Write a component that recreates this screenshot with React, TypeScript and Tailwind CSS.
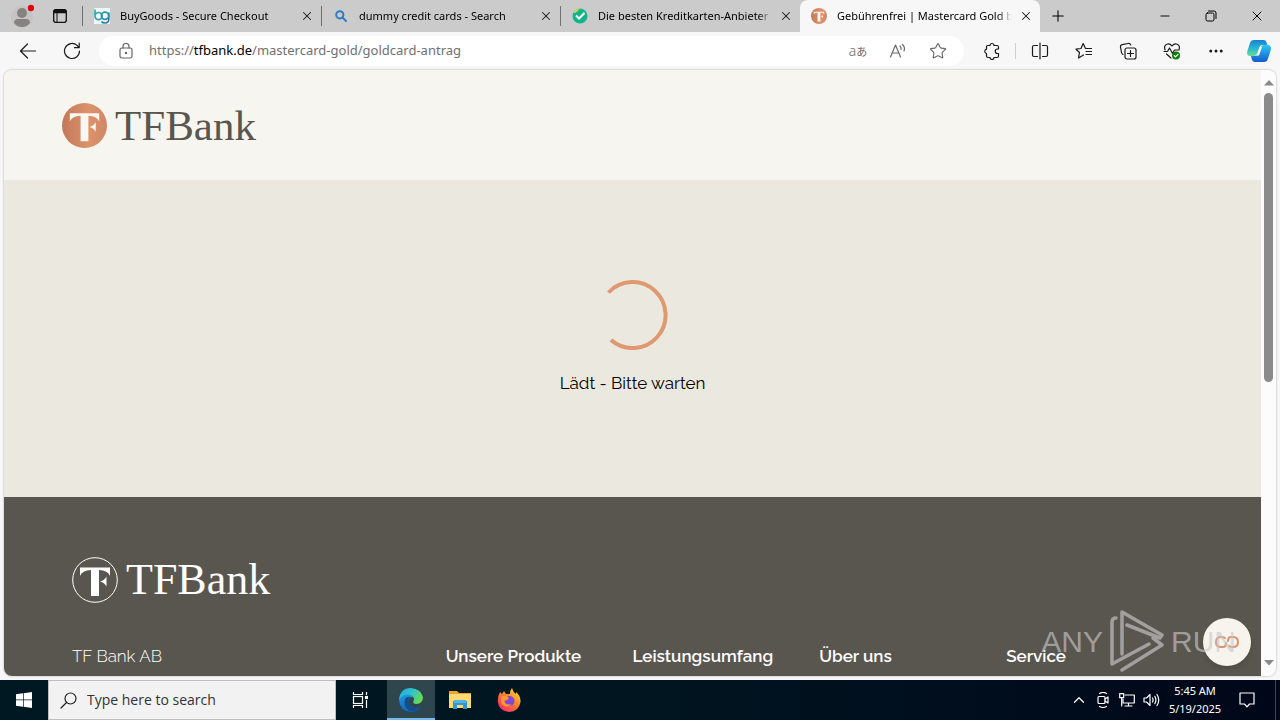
import type { ReactNode } from "react";
import { Star, X, Plus, Minus, MoreHorizontal, ChevronUp } from "lucide-react";

const uiFont = "font-['Noto_Sans','Open_Sans',sans-serif]";

function Tab({ title, icon, active = false, edge = true }: { title: string; icon: ReactNode; active?: boolean; edge?: boolean }) {
  return (
    <div
      role="tab"
      aria-selected={active}
      className={
        active
          ? "flex h-8 w-60 min-w-0 items-center rounded-t-lg bg-[#f7f7f7] pl-[11px]"
          : "flex h-8 w-[239px] min-w-0 items-center pl-[11px]"
      }
    >
      <span className="mr-2.5 flex h-4 w-4 shrink-0 items-center justify-center">{icon}</span>
      <span className="min-w-0 flex-1 overflow-hidden whitespace-nowrap text-[11px] leading-4 text-black [mask-image:linear-gradient(to_right,black_92%,transparent)]">
        {title}
      </span>
      <button aria-label={"Close " + title} className="flex h-7 w-7 shrink-0 items-center justify-center text-[#1b1b1b]">
        <X className="h-3.5 w-3.5" strokeWidth={1.8} />
      </button>
      {!active && edge && <span className="h-5 w-px shrink-0 bg-[#707070]" />}
    </div>
  );
}

function Monogram({ className }: { className: string }) {
  return (
    <g className={className}>
      <path d="M8 10.500H38V19Q36 13.500 27 13V39H19V13Q10 13.500 8 19Z" />
      <path d="M34.500 19.500V29.500Q32.500 25.500 28 24.500Q32.500 23.500 34.500 19.500Z" />
    </g>
  );
}

function CopperMark({ className, id }: { className: string; id: string }) {
  return (
    <svg viewBox="0 0 46 46" className={className} aria-hidden="true">
      <defs>
        <linearGradient id={id} x1="0" y1="0" x2="1" y2="0">
          <stop offset="0" stopColor="#c4775b" />
          <stop offset="0.6" stopColor="#dc936b" />
          <stop offset="1" stopColor="#cf8767" />
        </linearGradient>
      </defs>
      <circle cx="23" cy="23" r="23" fill={`url(#${id})`} />
      <Monogram className="fill-[#fbf8f3]" />
    </svg>
  );
}

function ToolButton({ label, children }: { label: string; children: ReactNode }) {
  return (
    <button aria-label={label} className="flex h-8 w-11 shrink-0 items-center justify-center text-[#1b1b1b]">
      {children}
    </button>
  );
}

const line = { fill: "none", stroke: "currentColor", strokeWidth: 1.2, strokeLinecap: "round", strokeLinejoin: "round" } as const;

function TabStrip() {
  return (
    <div className="flex h-8 shrink-0 bg-[#cbcbcb]">
      <div className="flex w-[83px] shrink-0 items-center">
        <button aria-label="Profile" className="flex h-8 w-11 shrink-0 items-center justify-center">
          <svg viewBox="0 0 24 26" className="h-[26px] w-6">
            <circle cx="12" cy="14" r="11" fill="#c6c4c2" />
            <circle cx="12" cy="10" r="5" fill="#85827f" />
            <path d="M4 20Q4 16 8 16H16Q20 16 20 20Q17 24 12 24T4 20Z" fill="#85827f" />
            <circle cx="21" cy="5" r="3.2" fill="#e3000f" />
          </svg>
        </button>
        <button aria-label="Tab actions" className="flex h-8 w-8 shrink-0 items-center justify-center">
          <svg viewBox="0 0 16 16" className="h-4 w-4">
            <rect x="1.7" y="1.7" width="12.6" height="12.6" rx="2" fill="none" stroke="#111" strokeWidth="1.3" />
            <path d="M1.5 3.5Q1.5 1.5 3.5 1.5H12.5Q14.5 1.5 14.5 3.5V5.2H1.5Z" fill="#111" />
            <path d="M5 5V14" stroke="#111" />
          </svg>
        </button>
        <span className="ml-auto h-5 w-px bg-[#707070]" />
      </div>
      <div role="tablist" className="flex min-w-0">
        <Tab
          title="BuyGoods - Secure Checkout"
          icon={
            <svg viewBox="0 0 16 16" className="h-4 w-4">
              <rect width="16" height="16" fill="#eef8f9" />
              <g fill="none" strokeWidth="1.7">
                <path d="M1 1.5V8A3.6 3.6 0 1 0 4.6 4.5Q2 4.5 1 7" stroke="#39a5ac" />
                <path d="M14.8 4.5V11.5Q14.5 15 11 15Q8.500 15 7.500 13.500" stroke="#257fa3" />
                <circle cx="11" cy="7.800" r="3.600" stroke="#2e91ad" />
              </g>
            </svg>
          }
        />
        <Tab
          title="dummy credit cards - Search"
          icon={
            <svg viewBox="0 0 16 16" className="h-4 w-4" fill="none" stroke="#2f7cc4" strokeWidth="2">
              <circle cx="6.800" cy="6.800" r="3.600" />
              <path d="M9.500 9.500L13 13" strokeLinecap="round" />
            </svg>
          }
        />
        <Tab
          title="Die besten Kreditkarten-Anbieter"
          edge={false}
          icon={
            <svg viewBox="0 0 16 16" className="h-4 w-4">
              <circle cx="8" cy="8" r="7.500" fill="#11b589" />
              <path d="M1.500 4.500Q4 .5 8 .5L3.500 5Z" fill="#e7d84b" />
              <path d="M4 7.500L7 10.500L12.500 5" fill="none" stroke="#fff" strokeWidth="2" />
            </svg>
          }
        />
        <Tab title="Gebührenfrei | Mastercard Gold b" active icon={<CopperMark id="tabCopper" className="h-4 w-4" />} />
      </div>
      <button aria-label="New tab" className="flex h-8 w-9 shrink-0 items-center justify-center text-black">
        <Plus className="h-[18px] w-[18px]" strokeWidth={1.4} />
      </button>
      <div className="ml-auto flex shrink-0 text-black">
        <button aria-label="Minimize" className="flex h-8 w-[46px] items-center justify-center">
          <Minus className="h-3.5 w-3.5" strokeWidth={1.6} />
        </button>
        <button aria-label="Restore" className="flex h-8 w-[46px] items-center justify-center">
          <svg viewBox="0 0 12 12" className="h-3 w-3" {...line} strokeWidth={1}>
            <rect x="1" y="3" width="8" height="8" rx="1.500" />
            <path d="M3.500 1H9Q11 1 11 3V8.500" />
          </svg>
        </button>
        <button aria-label="Close window" className="flex h-8 w-[46px] items-center justify-center">
          <X className="h-4 w-4" strokeWidth={1.5} />
        </button>
      </div>
    </div>
  );
}

function Toolbar() {
  return (
    <div className="flex h-[38px] shrink-0 items-center bg-[#f7f7f7] pl-1.5">
      <ToolButton label="Back">
        <svg viewBox="0 0 18 18" className="h-[18px] w-[18px]" {...line}>
          <path d="M16.500 9H1.500M8.500 2L1.500 9L8.500 16" />
        </svg>
      </ToolButton>
      <ToolButton label="Refresh">
        <svg viewBox="0 0 18 18" className="h-[18px] w-[18px]" {...line}>
          <path d="M16.500 9A7.500 7.500 0 1 1 14 3.400L16 5.500M16.200 1V5.700H11.500" />
        </svg>
      </ToolButton>
      <div className="ml-[5px] flex h-[30px] min-w-0 flex-1 items-center rounded-full bg-white pr-1.5">
        <span className="flex w-[50px] shrink-0 justify-center pl-1 text-[#666]">
          <svg viewBox="0 0 14 16" className="h-4 w-3.5" {...line}>
            <rect x="1" y="5" width="12" height="10" rx="1.800" />
            <path d="M4 5V3.500A3 3 0 0 1 10 3.500V5" />
            <circle cx="7" cy="10" r=".6" fill="currentColor" />
          </svg>
        </span>
        <a href="https://tfbank.de/mastercard-gold/goldcard-antrag" className="min-w-0 flex-1 truncate text-[13px] text-[#707070]">
          https://<span className="text-black">tfbank.de</span>/mastercard-gold/goldcard-antrag
        </a>
        <button aria-label="Translate" className="flex h-7 w-10 shrink-0 items-center justify-center text-[#6a6a6a]">
          <span className="text-sm leading-5 font-light">a</span>
          <span className="font-['Noto_Sans_CJK_JP',sans-serif] text-[11px] leading-5">あ</span>
        </button>
        <button aria-label="Read aloud" className="flex h-7 w-10 shrink-0 items-center justify-center text-[#6a6a6a]">
          <svg viewBox="0 0 18 16" className="h-4 w-[18px]" {...line}>
            <path d="M1.500 14L6.500 2L11.500 14M3.200 10H9.800M11 3Q12.500 4.500 12 6.500M13.500 1.500Q16.500 4.500 15 8" />
          </svg>
        </button>
        <button aria-label="Add to favorites" className="flex h-7 w-10 shrink-0 items-center justify-center text-[#6a6a6a]">
          <Star className="h-[18px] w-[18px]" strokeWidth={1.500} />
        </button>
      </div>
      <div className="ml-1.5 flex shrink-0 items-center">
        <ToolButton label="Extensions">
          <svg viewBox="0 0 18 18" className="h-[18px] w-[18px]" {...line}>
            <path d="M4.500 3.500H7A2 2 0 0 1 11 3.500H14Q15.500 3.500 15.500 5V7H14.500A2 2 0 0 0 14.500 11.500H15.500V14Q15.500 15.500 14 15.500H11A2 2 0 0 1 7 15.500H5Q3.500 15.500 3.500 14V11.500A2.200 2.200 0 0 1 3.500 7.200V5Q3.500 3.500 4.500 3.500Z" />
          </svg>
        </ToolButton>
        <span className="mr-0.5 ml-px h-4 w-px bg-[#cfcfcf]" />
        <ToolButton label="Split screen">
          <svg viewBox="0 0 18 18" className="h-[18px] w-[18px]" {...line}>
            <path d="M9 1V17M6.500 3.500H3Q1.500 3.500 1.500 5V13Q1.500 14.500 3 14.500H6.500M11.500 3.500H15Q16.500 3.500 16.500 5V13Q16.500 14.500 15 14.500H11.500" />
          </svg>
        </ToolButton>
        <ToolButton label="Favorites">
          <svg viewBox="0 0 18 18" className="h-[18px] w-[18px]" {...line}>
            <path d="M16.500 6.500H10.500L8.200 1.500L6 6.500L1 7.200L4.500 10.500L3.500 16L8.500 13M11 9.500H16.500M11 12.500H16.500" />
          </svg>
        </ToolButton>
        <ToolButton label="Collections">
          <svg viewBox="0 0 18 18" className="h-[18px] w-[18px]" {...line}>
            <rect x="6" y="6" width="11" height="11" rx="2" />
            <path d="M11.500 8.500V14.500M8.500 11.500H14.500M4 12.500Q2.800 12 2.500 10.500L1.500 5Q1.200 3 3.200 2.600L9 1.500Q11 1.200 11.800 3" />
          </svg>
        </ToolButton>
        <ToolButton label="Browser essentials">
          <svg viewBox="0 0 18 18" className="h-[18px] w-[18px]" {...line}>
            <path d="M2 8Q.5 3 4.500 2Q7 1.500 9 4Q11 1.500 13.500 2Q17.500 3 16 8M1 9.500H4.500L6.500 6L9.500 11.500L11.500 8H15M3.500 12L8 16" />
            <circle cx="13" cy="13.500" r="4" fill="#107c10" stroke="none" />
            <path d="M11.200 13.600L12.500 14.800L15 12.300" stroke="#fff" />
          </svg>
        </ToolButton>
        <ToolButton label="Settings and more">
          <MoreHorizontal className="h-[18px] w-[18px]" strokeWidth={2} />
        </ToolButton>
        <button aria-label="Copilot" className="flex h-8 w-[42px] items-center justify-center">
          <svg viewBox="0 0 24 22" className="h-[22px] w-6">
            <defs>
              <linearGradient id="pilotLeft" x1="0" y1="0" x2="0" y2="1">
                <stop offset="0" stopColor="#1680d8" />
                <stop offset=".55" stopColor="#2bb9cc" />
                <stop offset="1" stopColor="#6bdc93" />
              </linearGradient>
              <linearGradient id="pilotRight" x1="0" y1="0" x2="0" y2="1">
                <stop offset="0" stopColor="#2bc7f4" />
                <stop offset="1" stopColor="#145bd0" />
              </linearGradient>
            </defs>
            <path d="M7 0H17Q19 0 19.800 3L20.500 5H15Q13 5 12.300 7.500L10 14Q9.200 16 7 16H3Q-1 16 .5 10.500L3 3Q4 0 7 0Z" fill="url(#pilotLeft)" />
            <path d="M17 22H8Q5.500 22 4.700 19L4 16H8.500Q10.500 16 11.300 14L14 7Q14.800 5 17 5H21Q25 5.500 23.500 11L21 18.500Q20 22 17 22Z" fill="url(#pilotRight)" />
            <path d="M13 7L10 15.500H12L15 7Z" fill="#f7f7f7" />
          </svg>
        </button>
      </div>
    </div>
  );
}

function Scrollbar() {
  return (
    <div className="flex w-[15px] shrink-0 flex-col items-center bg-[#fcfcfc] py-2.5">
      <svg viewBox="0 0 10 6" className="h-1.5 w-2.5 fill-[#8a8a8a]">
        <path d="M5 0L10 5.500H0Z" />
      </svg>
      <div className="mt-[7px] w-[9px] flex-1">
        <div className="h-[51%] rounded-full bg-[#8b8b8b]" />
      </div>
      <svg viewBox="0 0 10 6" className="h-1.5 w-2.5 fill-[#8a8a8a]">
        <path d="M5 5.500L10 0H0Z" />
      </svg>
    </div>
  );
}

function Watermark() {
  return (
    <div className="pointer-events-none absolute right-10 bottom-0 flex h-[70px] items-center gap-1.5 font-['Liberation_Sans_Narrow','Liberation_Sans',sans-serif] text-[30px] text-[#c8c8c8]/65">
      <span>ANY</span>
      <svg viewBox="0 0 56 62" className="h-[62px] w-14" fill="none" stroke="currentColor" strokeWidth="3.500" strokeLinejoin="round" strokeLinecap="round">
        <path d="M7 8Q3 8 3 12V54L40 34M13 44V2L53 25L51 28L18 15M44 28L53 35L13 60" />
      </svg>
      <span>RUN</span>
    </div>
  );
}

const footerColumns = ["Unsere Produkte", "Leistungsumfang", "Über uns", "Service"];

function BankPage() {
  return (
    <div className="flex min-w-0 flex-1 flex-col font-['Raleway','Lato',sans-serif]">
      <header className="flex h-[110px] shrink-0 items-center bg-[#f7f5ef] pl-[58px]">
        <a href="#start" className="flex items-center gap-2 text-[#595650]">
          <CopperMark id="headerCopper" className="h-[45px] w-[45px]" />
          <span className="font-['Liberation_Serif',serif] text-[43px] leading-[45px]">TFBank</span>
        </a>
      </header>
      <main className="flex shrink-0 flex-col items-center bg-[#ebe8df] pt-[100px] pb-[102px]">
        <svg viewBox="0 0 70 70" className="h-[70px] w-[70px]" role="img" aria-label="Lädt">
          <path d="M10.500 12.500A33 33 0 1 1 13 60" fill="none" stroke="#df986f" strokeWidth="4" />
        </svg>
        <p className="mt-[21px] text-[17px] leading-6 text-black">Lädt - Bitte warten</p>
      </main>
      <footer className="flex-1 bg-[#595650] px-[68px] pt-[60px] text-white">
        <a href="#start" className="flex items-center gap-2">
          <svg viewBox="0 0 46 46" className="h-[46px] w-[46px]" aria-hidden="true">
            <circle cx="23" cy="23" r="22.300" fill="none" stroke="#fff" />
            <Monogram className="fill-white" />
          </svg>
          <span className="font-['Liberation_Serif',serif] text-[44px] leading-[46px]">TFBank</span>
        </a>
        <div className="mt-[41px] grid grid-cols-6 text-[17px] leading-6 whitespace-nowrap">
          <p className="col-span-2 font-light">TF Bank AB</p>
          {footerColumns.map((name) => (
            <h2 key={name} className="font-semibold">
              {name}
            </h2>
          ))}
        </div>
      </footer>
    </div>
  );
}

function Taskbar() {
  return (
    <div className="flex h-10 shrink-0 bg-linear-to-r from-[#001822] via-[#001520] to-[#000719] text-white">
      <button aria-label="Start" className="flex w-12 shrink-0 items-center justify-center">
        <svg viewBox="0 0 16 16" className="h-4 w-4 fill-white">
          <path d="M0 2.300L7 1.300V7.600H0ZM7.700 1.200L16 0V7.600H7.700ZM0 8.300H7V14.700L0 13.700ZM7.700 8.300H16V16L7.700 14.800Z" />
        </svg>
      </button>
      <label className="flex w-72 min-w-0 items-center border border-[#bdbdbd] bg-[#f2f2f2] pl-[11px] text-[#222]">
        <svg viewBox="0 0 17 17" className="mr-2.5 h-[17px] w-[17px] shrink-0" {...line}>
          <circle cx="10.500" cy="6.500" r="5.500" />
          <path d="M6.500 10.500L1 16" />
        </svg>
        <input
          aria-label="Type here to search"
          placeholder="Type here to search"
          className="w-full min-w-0 bg-transparent font-['Open_Sans',sans-serif] text-sm outline-none placeholder:text-[#333]"
        />
      </label>
      <button aria-label="Task view" className="flex w-12 shrink-0 items-center justify-center">
        <svg viewBox="0 0 16 16" className="h-4 w-4" fill="none" stroke="#fff" strokeWidth="1.200">
          <rect x="1.500" y="4.500" width="9" height="7" />
          <path d="M1.500 0V2.500H10.500V0M1.500 16V13.500H10.500V16M14.500 0V3M14.500 8V16" />
          <rect x="13.500" y="4.500" width="2" height="2" fill="#fff" />
        </svg>
      </button>
      <div className="ml-[3px] flex shrink-0 gap-px">
        <button aria-label="Microsoft Edge" className="flex w-12 items-center justify-center border-b-2 border-[#76b9ed] bg-[#30464e] pt-0.5">
          <svg viewBox="0 0 24 24" className="h-6 w-6">
            <defs>
              <linearGradient id="edgeTop" x1="0" y1="0" x2="1" y2="0.500">
                <stop offset="0" stopColor="#28a7df" />
                <stop offset=".5" stopColor="#2cc3d0" />
                <stop offset="1" stopColor="#68d957" />
              </linearGradient>
              <linearGradient id="edgeBase" x1="0" y1="0" x2="0" y2="1">
                <stop offset="0" stopColor="#1f9ce0" />
                <stop offset="1" stopColor="#1267b8" />
              </linearGradient>
            </defs>
            <path d="M0 12Q1 4 10 5Q15 6 15 11Q15 9 12 9Q9 10 9 14Q10 20 17 20Q20 20 22 18Q18 24 11.500 24Q1 23 0 12Z" fill="url(#edgeBase)" />
            <path d="M6 11Q4 18 10 23Q17 25 22 18Q18 20 14 19Q9 17 9 13Q9 10 11 9Q8 8 6 11Z" fill="#124f91" />
            <path d="M0 12Q1 0 12 0Q22 1 24 9Q24 15 18 16Q13 16 14.500 13Q16 10 13 7.500Q5 4 0 12Z" fill="url(#edgeTop)" />
          </svg>
        </button>
        <button aria-label="File Explorer" className="flex w-12 items-center justify-center">
          <svg viewBox="0 0 22 20" className="h-5 w-[22px]">
            <path d="M0 1H8L10 3H22V18H0Z" fill="#e9a72d" />
            <path d="M0 4H22V18H0Z" fill="#fddb72" />
            <path d="M4 11H18V19H14V15H8V19H4Z" fill="#3295d5" />
            <path d="M5 10H17V13H5Z" fill="#54b4e7" />
          </svg>
        </button>
        <button aria-label="Firefox" className="flex w-12 items-center justify-center">
          <svg viewBox="0 0 24 24" className="h-6 w-6">
            <defs>
              <linearGradient id="foxFire" x1="1" y1="0" x2=".2" y2="1">
                <stop offset="0" stopColor="#fff04a" />
                <stop offset=".45" stopColor="#ff8b28" />
                <stop offset="1" stopColor="#f4286f" />
              </linearGradient>
            </defs>
            <path d="M3 4L5 6L7 3L9 6L13 6Q13 2 15 0Q16 4 19 6V4Q24 8 23.500 14Q22 23.500 12 24Q2 23 .8 14Q.5 8 3 4Z" fill="url(#foxFire)" />
            <circle cx="12.500" cy="13" r="5" fill="#8247d7" />
            <path d="M5 8Q9 7 12 10Q10 13 7 13Q9 18 15 16Q9 21 5 16Q3 12 5 8Z" fill="#ff9a2b" />
          </svg>
        </button>
      </div>
      <div className="ml-auto flex shrink-0 items-center">
        <button aria-label="Show hidden icons" className="flex w-6 justify-center">
          <ChevronUp className="h-[18px] w-[18px]" strokeWidth={1.600} />
        </button>
        <button aria-label="Meet now" className="flex w-6 justify-center">
          <svg viewBox="0 0 16 16" className="h-4 w-4" {...line}>
            <rect x="3" y="4.500" width="7" height="7" rx="1" />
            <path d="M10 7L13 5V11L10 9M4.500 1.500Q8 -.5 11.500 1.500M4.500 14.500Q8 16.500 11.500 14.500" />
          </svg>
        </button>
        <button aria-label="Network" className="flex w-6 justify-center">
          <svg viewBox="0 0 16 14" className="h-3.5 w-4" {...line}>
            <path d="M6 2H15.300V10H4V6M9.500 10V13M6 13H13" />
            <rect x=".7" y=".7" width="4" height="4" />
            <path d="M2.700 5V13" />
          </svg>
        </button>
        <button aria-label="Volume" className="flex w-6 justify-center">
          <svg viewBox="0 0 17 14" className="h-3.5 w-[17px]" {...line}>
            <path d="M1 5H3.500L7 1.500V12.500L3.500 9H1ZM9.500 5Q10.700 7 9.500 9M11.800 3.300Q14 7 11.800 10.700M14 1.500Q17.500 7 14 12.500" />
          </svg>
        </button>
        <div className="w-16 text-center text-[11px] leading-[18px] whitespace-nowrap">
          <p>5:45 AM</p>
          <p>5/19/2025</p>
        </div>
        <button aria-label="Notifications" className="flex w-10 justify-center">
          <svg viewBox="0 0 16 16" className="h-4 w-4" {...line}>
            <path d="M1 1H15V12H10.500L8 14.800L5.500 12H1Z" />
          </svg>
        </button>
        <span className="mr-1 ml-2 h-10 w-px bg-[#3b4350]" />
      </div>
    </div>
  );
}

export default function App() {
  return (
    <div className={"flex h-screen flex-col overflow-hidden bg-[#f7f7f7] " + uiFont}>
      <TabStrip />
      <Toolbar />
      <div className="relative mx-1 mb-1 flex min-h-0 flex-1 overflow-hidden rounded-lg shadow-[0_0_2px_#999]">
        <BankPage />
        <Scrollbar />
        <button aria-label="Chat" className="absolute right-[25px] bottom-2.5 flex h-12 w-12 items-center justify-center rounded-full bg-[#f7f4ee] shadow-md">
          <svg viewBox="0 0 24 12" className="h-3 w-6" fill="none" stroke="#dc9470" strokeWidth="2" strokeLinecap="round">
            <path d="M10 2Q8.500 1 6 1Q1 1 1 6T6 11H8Q11 11 11 7M14 10Q15.500 11 18 11Q23 11 23 6T18 1H16Q13 1 13 5" />
          </svg>
        </button>
        <Watermark />
      </div>
      <Taskbar />
    </div>
  );
}
